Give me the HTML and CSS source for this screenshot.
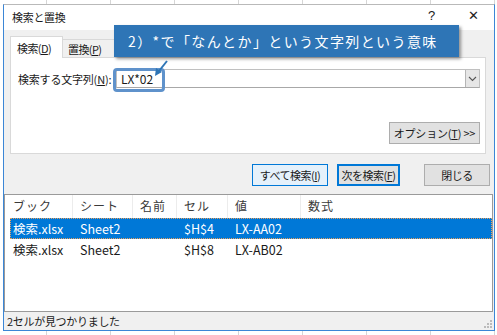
FILE: index.html
```html
<!DOCTYPE html>
<html lang="ja">
<head>
    <meta charset="UTF-8">
    <title>検索と置換</title>
    <link rel="stylesheet" href="styles.css">
</head>
<body>
    <div class="dialog">
        <div class="titlebar">
            <span class="title">検索と置換</span>
            <span class="help">?</span>
            <span class="close">✕</span>
        </div>
        <div class="body">
            <div class="tabs">
                <div class="tab active">検索(<u>D</u>)</div>
                <div class="tab">置換(<u>P</u>)</div>
            </div>
            <div class="panel">
                <div class="find-row">
                    <label class="find-label">検索する文字列(<u>N</u>):</label>
                    <div class="combo">
                        <span class="combo-text">LX*02</span>
                        <span class="combo-btn">
                            <svg width="9" height="6" viewBox="0 0 9 6"><path d="M1 1 L4.5 4.5 L8 1" fill="none" stroke="#555" stroke-width="1.1"/></svg>
                        </span>
                    </div>
                </div>
                <div class="options-row">
                    <button class="btn btn-options">オプション(<u>T</u>) &gt;&gt;</button>
                </div>
            </div>
            <div class="actions">
                <button class="btn hover btn-all">すべて検索(<u>I</u>)</button>
                <button class="btn default btn-next">次を検索(<u>F</u>)</button>
                <button class="btn btn-close">閉じる</button>
            </div>
        </div>
        <div class="results">
            <div class="row head">
                <div class="c1">ブック</div>
                <div class="c2">シート</div>
                <div class="c3">名前</div>
                <div class="c4">セル</div>
                <div class="c5">値</div>
                <div class="c6">数式</div>
            </div>
            <div class="row selected">
                <div class="c1">検索.xlsx</div>
                <div class="c2">Sheet2</div>
                <div class="c3"></div>
                <div class="c4">$H$4</div>
                <div class="c5">LX-AA02</div>
                <div class="c6"></div>
            </div>
            <div class="row">
                <div class="c1">検索.xlsx</div>
                <div class="c2">Sheet2</div>
                <div class="c3"></div>
                <div class="c4">$H$8</div>
                <div class="c5">LX-AB02</div>
                <div class="c6"></div>
            </div>
        </div>
        <div class="status">
            <span>2セルが見つかりました</span>
            <svg class="grip" width="8" height="8" viewBox="0 0 8 8">
                <rect x="6" y="0" width="2" height="2" fill="#bbb"/>
                <rect x="3" y="3" width="2" height="2" fill="#bbb"/>
                <rect x="6" y="3" width="2" height="2" fill="#bbb"/>
                <rect x="0" y="6" width="2" height="2" fill="#bbb"/>
                <rect x="3" y="6" width="2" height="2" fill="#bbb"/>
                <rect x="6" y="6" width="2" height="2" fill="#bbb"/>
            </svg>
        </div>

        <!-- annotation laid over the dialog -->
        <div class="callout">2）*で「なんとか」という文字列という意味</div>
        <div class="highlight"></div>
        <svg class="arrow" width="30" height="24" viewBox="0 0 30 24">
            <line x1="21" y1="6" x2="13" y2="16" stroke="#2e75b6" stroke-width="2"/>
            <path d="M9 21 L10 13 L16 17 Z" fill="#2e75b6"/>
        </svg>
    </div>
</body>
</html>
```

FILE: styles.css
```css
body {
    margin: 0;
    width: 497px;
    height: 335px;
    overflow: hidden;
    background-color: #ffffff;
    background-image: repeating-linear-gradient(90deg, transparent 0, transparent 46px, #d6d6d6 46px, #d6d6d6 47px, transparent 47px, transparent 64px);
    font-family: "Noto Sans CJK JP", "Noto Sans", sans-serif;
    font-size: 11px;
    color: #1a1a1a;
    padding-top: 4px;
    box-sizing: border-box;
    white-space: nowrap;
}

.dialog {
    position: relative;
    margin-left: 3px;
    width: 492px;
    height: 327px;
    box-sizing: border-box;
    border: 1px solid #3b86d6;
    border-top-color: #b9b9b9;
    background: #f0f0f0;
    display: flex;
    flex-direction: column;
}

.titlebar {
    height: 25px;
    background: #ffffff;
    display: flex;
    align-items: center;
    padding-left: 8px;
    flex-shrink: 0;
}
.title {
    flex: 1;
    font-size: 11px;
    letter-spacing: -0.3px;
    padding-bottom: 2px;
}
.help {
    font-family: "Liberation Sans", sans-serif;
    font-size: 13px;
    width: 12px;
    margin-right: 28px;
    padding-bottom: 4px;
}
.close {
    font-family: "DejaVu Sans", sans-serif;
    font-size: 13px;
    width: 26px;
    padding-bottom: 4px;
    color: #222;
}

.body {
    padding: 6px 6px 8px 6px;
    display: flex;
    flex-direction: column;
}

.tabs {
    display: flex;
    align-items: flex-end;
    height: 21px;
}
.tab {
    height: 18px;
    padding: 0 0 0 5px;
    border: 1px solid #d9d9d9;
    border-bottom: none;
    background: #f0f0f0;
    display: flex;
    align-items: center;
    box-sizing: border-box;
    letter-spacing: -0.6px;
    flex-shrink: 0;
}
.tab.active {
    height: 22px;
    width: 53px;
    background: #ffffff;
    margin-bottom: -1px;
    position: relative;
    z-index: 1;
    padding-left: 6px;
}
.tab:not(.active) {
    width: 52px;
    border-left: none;
}

.panel {
    width: 476px;
    height: 97px;
    box-sizing: border-box;
    background: #ffffff;
    border: 1px solid #d9d9d9;
    padding: 11px 5px 0 7px;
    display: flex;
    flex-direction: column;
}

.find-row {
    display: flex;
    align-items: center;
    height: 19px;
}
.find-label {
    width: 98px;
    letter-spacing: -0.2px;
}
.combo {
    flex: 1;
    height: 19px;
    box-sizing: border-box;
    border: 1px solid #c0c0c0;
    border-bottom-color: #a8a8a8;
    display: flex;
    align-items: center;
    justify-content: space-between;
    background: #fff;
}
.combo-text {
    padding-left: 4px;
    font-size: 12px;
}
.combo-btn {
    width: 14px;
    height: 17px;
    box-sizing: border-box;
    background: #e6e6e6;
    border-left: 1px solid #b5b5b5;
    display: flex;
    align-items: center;
    justify-content: center;
}

.options-row {
    display: flex;
    justify-content: flex-end;
    margin-top: 34px;
}

.btn {
    height: 22px;
    box-sizing: border-box;
    border: 1px solid #adadad;
    background: #e1e1e1;
    font-family: "Noto Sans CJK JP", "Noto Sans", sans-serif;
    font-size: 11px;
    letter-spacing: -0.5px;
    color: #1a1a1a;
    padding: 0;
    margin: 0;
    line-height: 18px;
    white-space: nowrap;
}
.btn-options {
    width: 91px;
    letter-spacing: -0.2px;
}

.actions {
    display: flex;
    justify-content: flex-end;
    margin-top: 10px;
    margin-right: -2px;
}
.btn.hover {
    background: #e5f1fb;
    border-color: #0078d7;
}
.btn.default {
    border: 2px solid #0078d7;
}
.btn-all {
    width: 76px;
}
.btn-next {
    width: 63px;
    margin-left: 9px;
}
.btn-close {
    width: 66px;
    margin-left: 24px;
}

.results {
    height: 118px;
    box-sizing: border-box;
    margin-right: 1px;
    background: #ffffff;
    border: 1px solid #9a9a9a;
    padding-left: 5px;
    font-size: 12.5px;
}
.row {
    display: flex;
    height: 21px;
    align-items: center;
}
.row > div {
    padding-left: 7px;
    box-sizing: border-box;
    white-space: nowrap;
}
.row .c1 { width: 63px; padding-left: 3px; }
.row .c2 { width: 60px; }
.row .c3 { width: 44px; }
.row .c4 { width: 51px; }
.row .c5 { width: 73px; }
.row .c6 { flex: 1; }

.row.head {
    height: 23px;
    color: #3a3a3a;
    font-size: 12px;
    letter-spacing: 1px;
}
.row.head > div {
    height: 23px;
    line-height: 22px;
    border-right: 1px solid #ececec;
}
.row.head .c6 {
    border-right: none;
}
.row.selected {
    background: #0078d7;
    color: #ffffff;
    outline: 1px dotted #e8a060;
    outline-offset: -1px;
}

.status {
    height: 18px;
    display: flex;
    align-items: center;
    justify-content: space-between;
    padding: 0 2px 0 3px;
    font-size: 11px;
    letter-spacing: -0.3px;
}
.grip {
    align-self: flex-end;
    margin-bottom: 2px;
}

.callout {
    position: absolute;
    left: 110px;
    top: 20px;
    width: 345px;
    height: 32px;
    background: #2e75b6;
    color: #ffffff;
    font-size: 14px;
    letter-spacing: 1.4px;
    display: flex;
    align-items: center;
    padding-left: 14px;
    box-sizing: border-box;
    box-shadow: 2px 2px 3px rgba(0, 0, 0, 0.4);
    z-index: 3;
}
.highlight {
    position: absolute;
    left: 109px;
    top: 63px;
    width: 52px;
    height: 24px;
    box-sizing: border-box;
    border: 3px solid #5f92cb;
    border-radius: 4px;
    z-index: 2;
}
.arrow {
    position: absolute;
    left: 142px;
    top: 50px;
    z-index: 4;
}
```
